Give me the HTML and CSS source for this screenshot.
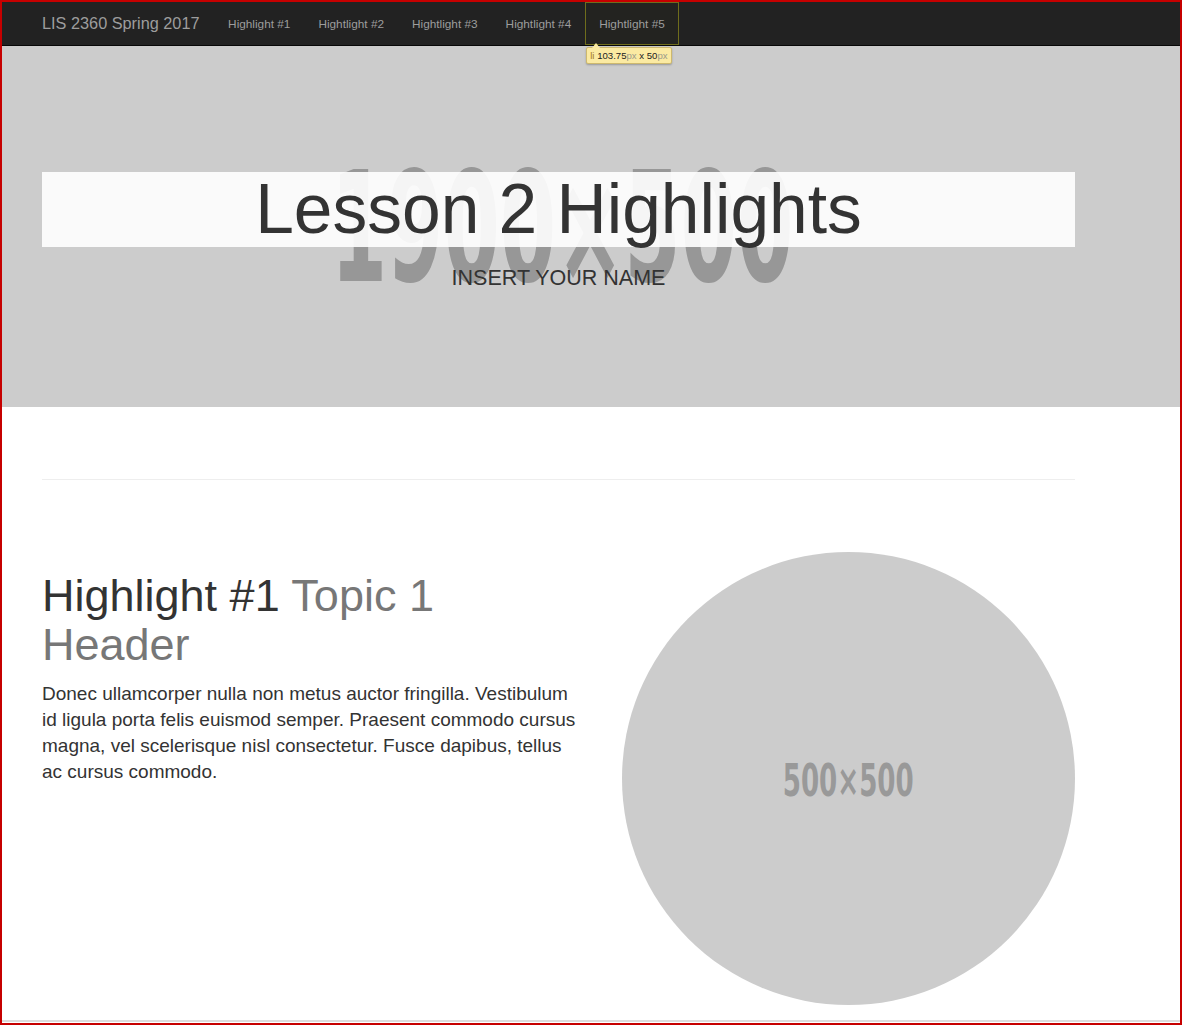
FILE: index.html
```html
<!DOCTYPE html>
<html lang="en">
<head>
<meta charset="utf-8">
<title>Lesson 2 Highlights</title>
<link rel="stylesheet" href="styles.css">
</head>
<body>
<div class="frame">
  <nav class="navbar">
    <a class="brand" href="#">LIS 2360 Spring 2017</a>
    <ul class="nav">
      <li><a href="#">Highlight #1</a></li>
      <li><a href="#">Hightlight #2</a></li>
      <li><a href="#">Hightlight #3</a></li>
      <li><a href="#">Hightlight #4</a></li>
      <li class="inspected"><a href="#">Hightlight #5</a>
        <div class="devtip"><span class="tag">li</span> <span class="num">103.75</span><span class="unit">px</span> <span class="num">x</span> <span class="num">50</span><span class="unit">px</span></div>
      </li>
    </ul>
  </nav>
  <main class="main">
    <header class="hero">
      <div class="hero-ph">1900×500</div>
      <div class="hero-content">
        <h1 class="hero-title">Lesson 2 Highlights</h1>
        <p class="hero-name">INSERT YOUR NAME</p>
      </div>
    </header>
    <div class="container">
      <hr class="divider">
      <section class="featurette">
        <div class="feat-text">
          <h2 class="feat-heading">Highlight #1 <span class="muted">Topic 1 Header</span></h2>
          <p class="lead">Donec ullamcorper nulla non metus auctor fringilla. Vestibulum id ligula porta felis euismod semper. Praesent commodo cursus magna, vel scelerisque nisl consectetur. Fusce dapibus, tellus ac cursus commodo.</p>
        </div>
        <div class="feat-img"><span class="img-ph">500×500</span></div>
      </section>
    </div>
  </main>
  <div class="bottom-line"></div>
</div>
</body>
</html>
```
FILE: styles.css
```css
html, body {
  margin: 0;
  padding: 0;
  background: #fff;
}
body {
  font-family: "Liberation Sans", Arial, sans-serif;
  color: #333;
}
.frame {
  width: 1182px;
  height: 1025px;
  box-sizing: border-box;
  border: 2px solid #c60000;
  display: flex;
  flex-direction: column;
  overflow: hidden;
}
.navbar {
  height: 43px;
  flex: none;
  background: #222;
  border-bottom: 1px solid #080808;
  display: flex;
  align-items: stretch;
  padding-left: 40px;
  position: relative;
  z-index: 2;
}
.brand {
  display: flex;
  align-items: center;
  font-size: 16.3px;
  color: #9d9d9d;
  text-decoration: none;
  padding-right: 14.6px;
}
.nav {
  display: flex;
  list-style: none;
  margin: 0;
  padding: 0;
}
.nav li {
  position: relative;
  display: flex;
  align-items: center;
  padding: 0 14px;
}
.nav a {
  color: #9d9d9d;
  font-size: 11.8px;
  text-decoration: none;
}
.nav li.inspected {
  box-shadow: inset 0 0 0 1px #6f6d1c;
  background: #232320;
}
.devtip {
  position: absolute;
  left: 1px;
  top: 45px;
  height: 15px;
  padding: 0 3px;
  background: #fbeaa2;
  border: 1px solid #cdb86e;
  border-radius: 2px;
  font-size: 9.6px;
  line-height: 15px;
  white-space: nowrap;
  color: #222;
  box-shadow: 0 1px 2px rgba(0,0,0,0.25);
}
.devtip::before {
  content: "";
  position: absolute;
  left: 5px;
  top: -5px;
  border-left: 4px solid transparent;
  border-right: 4px solid transparent;
  border-bottom: 5px solid #fbeaa2;
}
.devtip .tag { color: #a0781e; }
.devtip .num { color: #222; }
.devtip .unit { color: #9a9a8a; }

.main {
  flex: 1;
  overflow: hidden;
}
.hero {
  position: relative;
  height: 361px;
  background: #ccc;
  overflow: hidden;
}
.hero-ph {
  position: absolute;
  left: calc(50% - 29px);
  top: 50%;
  transform: translate(-50%, -50%) translateY(1px) scaleX(0.585);
  font-family: "DejaVu Sans", sans-serif;
  font-weight: bold;
  font-stretch: condensed;
  font-size: 154px;
  line-height: 1;
  color: #979797;
  white-space: nowrap;
}
.hero-content {
  position: relative;
  padding: 126px 105px 0 40px;
  display: flex;
  flex-direction: column;
  align-items: stretch;
}
.hero-title {
  margin: 0;
  height: 75px;
  background: rgba(255,255,255,0.9);
  text-align: center;
  font-size: 69.5px;
  line-height: 75px;
  font-weight: normal;
  color: #333;
}
.hero-name {
  margin: 16px 0 0;
  text-align: center;
  font-size: 21.5px;
  line-height: 30px;
  color: #333;
}
.container {
  padding: 0 105px 0 40px;
}
.divider {
  margin: 72px 0 72px;
  border: 0;
  border-top: 1px solid #eee;
  height: 0;
}
.featurette {
  display: grid;
  grid-template-columns: 540px 453px;
  column-gap: 40px;
  align-items: start;
}
.feat-heading {
  margin: 20.4px 0 12px;
  font-size: 45px;
  line-height: 48.5px;
  font-weight: normal;
  color: #333;
}
.muted { color: #777; }
.lead {
  margin: 0;
  font-size: 19px;
  line-height: 26px;
  color: #333;
}
.feat-img {
  width: 453px;
  height: 453px;
  border-radius: 50%;
  background: #ccc;
  display: flex;
  align-items: center;
  justify-content: center;
}
.img-ph {
  font-family: "DejaVu Sans", sans-serif;
  font-weight: bold;
  font-stretch: condensed;
  font-size: 44px;
  line-height: 1;
  color: #999;
  transform: translateY(2px) scaleX(0.66);
  white-space: nowrap;
}
.bottom-line {
  flex: none;
  height: 2px;
  background: #dcdcdc;
  margin-bottom: 1px;
}
```
